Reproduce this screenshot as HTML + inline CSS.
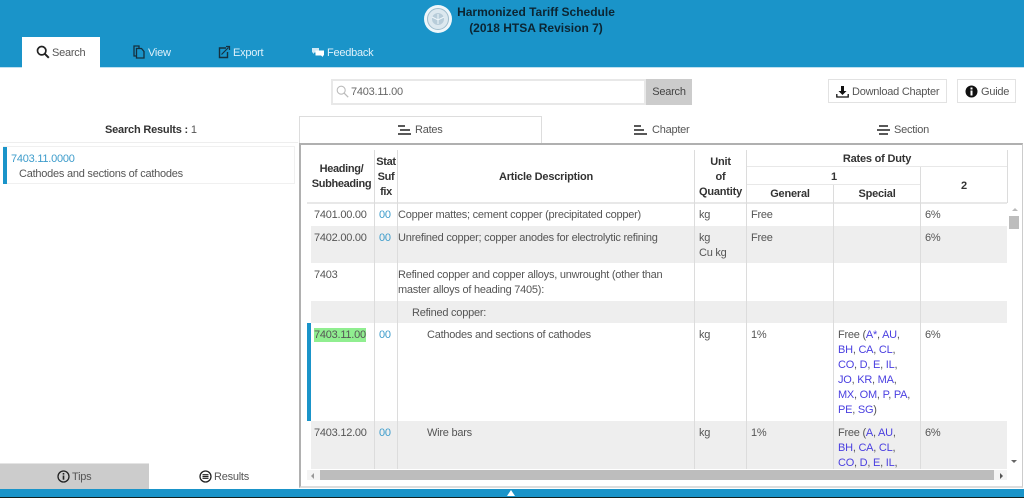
<!DOCTYPE html>
<html lang="en"><head><meta charset="utf-8"><title>Harmonized Tariff Schedule</title>
<style>
html,body{margin:0;padding:0;width:1024px;height:498px;overflow:hidden;background:#fff}
body{position:relative;font-family:"Liberation Sans",Arial,sans-serif;font-size:11px;letter-spacing:-.24px;line-height:15px;color:#555;filter:blur(.3px)}
div,svg,span.a{position:absolute}
.t{white-space:nowrap;margin-top:1px}
.b{font-weight:bold;color:#333;font-size:11px;letter-spacing:-.2px}
.c{text-align:center}
.l{color:#3d9ccb}
a{color:#4a3fe0;text-decoration:none}
.g{background:#eee;left:311px;width:696px}
.v{background:#dcdcdc;width:1px}
.h{background:#e8e8e8;height:1px}
.n{color:#dff1fa}
</style></head><body>
<div style="left:0;top:0;width:1024px;height:67px;background:#1a94c9"></div>
<div style="left:0;top:67px;width:1024px;height:1px;background:#bfe0f0"></div>
<svg style="left:423px;top:4px" width="30" height="30" viewBox="0 0 30 30"><circle cx="15" cy="15" r="14" fill="#eef6fa"/><circle cx="15" cy="15" r="10.5" fill="#dce8ef" stroke="#9fbccc"/><circle cx="15" cy="15" r="6" fill="#b7ccd9"/><path d="M9 13l6 3 6-3M15 10v10" stroke="#eef6fa" fill="none"/></svg>
<div class="t c" style="left:436px;top:4px;margin-top:0;width:200px;font-weight:bold;font-size:12px;letter-spacing:0;line-height:16px;color:#0b2533">Harmonized Tariff Schedule<br>(2018 HTSA Revision 7)</div>

<div style="left:22px;top:37px;width:78px;height:31px;background:#fff"></div>
<svg style="left:36px;top:45px" width="14" height="14" viewBox="0 0 14 14"><circle cx="5.7" cy="5.700" r="4.200" fill="none" stroke="#222" stroke-width="1.700"/><path d="M8.800 8.800l4 4" stroke="#222" stroke-width="2"/></svg>
<div class="t" style="left:52px;top:45px;color:#555">Search</div>
<svg style="left:133px;top:45px" width="12" height="14" viewBox="0 0 12 14"><path d="M3.500 3.500V13H11V6.500L8.500 3.500zM3.500 11H1V1H6V3.500" fill="none" stroke="#15303f" stroke-width="1.300"/></svg>
<div class="t n" style="left:148px;top:45px">View</div>
<svg style="left:218px;top:45px" width="13" height="14" viewBox="0 0 13 14"><path d="M8 3H1.500v9.500H9.500V7" fill="none" stroke="#15303f" stroke-width="1.400"/><path d="M3.500 9.500L10.500 2.500M8 1.500h3.500V5" fill="none" stroke="#15303f" stroke-width="1.200"/></svg>
<div class="t n" style="left:233px;top:45px">Export</div>
<svg style="left:312px;top:47px" width="12" height="11" viewBox="0 0 12 11"><path d="M0 1h7v4.500H2.500L1 7V5.500H0z" fill="#cfe8f5"/><path d="M3.500 3.500H12v5h-1V10L9 8.500H3.500z" fill="#fff"/></svg>
<div class="t n" style="left:327px;top:45px">Feedback</div>

<div style="left:331px;top:79px;width:311px;height:22px;border:2px solid #e8e8e8"></div>
<svg style="left:336px;top:85px" width="13" height="13" viewBox="0 0 13 13"><circle cx="5.200" cy="5.200" r="4" fill="none" stroke="#bbb" stroke-width="1.100"/><path d="M8.200 8.200l4 4" stroke="#bbb" stroke-width="1.300"/></svg>
<div class="t" style="left:351px;top:84px;color:#666">7403.11.00</div>
<div class="t c" style="left:646px;top:79px;margin-top:0;width:46px;height:26px;line-height:27px;background:#ccc;color:#444">Search</div>

<div style="left:828px;top:79px;width:117px;height:22px;border:1px solid #e2e2e2"></div>
<svg style="left:836px;top:85px" width="13" height="13" viewBox="0 0 13 13"><path d="M5 1h3v5h2.500l-4 4-4-4H5z" fill="#111"/><path d="M.8 9v3h11.400V9" fill="none" stroke="#111" stroke-width="1.300"/></svg>
<div class="t" style="left:852px;top:84px">Download Chapter</div>
<div style="left:957px;top:79px;width:57px;height:22px;border:1px solid #e2e2e2"></div>
<svg style="left:965px;top:85px" width="13" height="13" viewBox="0 0 13 13"><circle cx="6.500" cy="6.500" r="6" fill="#111"/><rect x="5.500" y="5.500" width="2" height="5" fill="#fff"/><rect x="5.500" y="2.500" width="2" height="2" fill="#fff"/></svg>
<div class="t" style="left:981px;top:84px">Guide</div>

<div class="t b" style="left:105px;top:122px">Search Results : <span style="font-weight:normal;color:#555">1</span></div>
<div class="h" style="left:0;top:142px;width:298px;background:#eee"></div>
<div style="left:3px;top:146px;width:292px;height:38px;border:1px solid #f0f0f0;box-sizing:border-box"></div>
<div style="left:3px;top:147px;width:4px;height:37px;background:#1a94c9"></div>
<div class="t l" style="left:11px;top:151px">7403.11.0000</div>
<div class="t" style="left:19px;top:166px">Cathodes and sections of cathodes</div>

<div style="left:0;top:463px;width:149px;height:26px;background:#ccc;border-top:1px solid #e4e4e4;box-sizing:border-box"></div>
<svg style="left:57px;top:470px" width="13" height="13" viewBox="0 0 13 13"><circle cx="6.500" cy="6.500" r="5.500" fill="none" stroke="#222" stroke-width="1.300"/><rect x="5.700" y="5.500" width="1.600" height="4.200" fill="#222"/><rect x="5.700" y="3" width="1.600" height="1.600" fill="#222"/></svg>
<div class="t" style="left:72px;top:469px">Tips</div>
<svg style="left:199px;top:470px" width="13" height="13" viewBox="0 0 13 13"><circle cx="6.500" cy="6.500" r="5.500" fill="none" stroke="#222" stroke-width="1.300"/><path d="M3.500 4.700h6M3.500 6.500h6M3.500 8.300h6" stroke="#222" stroke-width="1.200"/></svg>
<div class="t" style="left:214px;top:469px">Results</div>

<div style="left:299px;top:116px;width:243px;height:27px;border:1px solid #ddd;border-bottom:0;box-sizing:border-box"></div>
<svg style="left:398px;top:124px" width="14" height="12" viewBox="0 0 14 12"><path d="M0 2h7M2 6h10M0 10h13" stroke="#222" stroke-width="1.500"/></svg>
<div class="t" style="left:415px;top:122px">Rates</div>
<svg style="left:634px;top:124px" width="14" height="12" viewBox="0 0 14 12"><path d="M0 2h7M0 6h10M0 10h13" stroke="#222" stroke-width="1.500"/></svg>
<div class="t" style="left:652px;top:122px">Chapter</div>
<svg style="left:877px;top:124px" width="13" height="12" viewBox="0 0 13 12"><path d="M2 2h9M0 6h13M2 10h9" stroke="#222" stroke-width="1.500"/></svg>
<div class="t" style="left:894px;top:122px">Section</div>

<div style="left:299px;top:143px;width:724px;height:345px;border:2px solid #b0b0b0;border-right:1px solid #ccc;border-bottom:2px solid #ddd;box-sizing:border-box"></div>

<div class="g" style="top:226px;height:37px"></div>
<div class="g" style="top:301px;height:22px"></div>
<div class="g" style="top:421px;height:48px"></div>
<div style="left:307px;top:323px;width:4px;height:98px;background:#1a94c9"></div>

<div class="h" style="left:307px;top:202px;width:700px;height:2px"></div>
<div class="h" style="left:747px;top:166px;width:260px"></div>
<div class="h" style="left:747px;top:184px;width:174px"></div>
<div class="v" style="left:374px;top:150px;height:319px"></div>
<div class="v" style="left:397px;top:150px;height:319px"></div>
<div class="v" style="left:694px;top:150px;height:319px"></div>
<div class="v" style="left:746px;top:150px;height:319px"></div>
<div class="v" style="left:833px;top:185px;height:284px"></div>
<div class="v" style="left:920px;top:167px;height:302px"></div>
<div class="v" style="left:1007px;top:150px;height:53px"></div>

<div class="t b c" style="left:310px;top:161px;width:63px;letter-spacing:-.35px">Heading/<br>Subheading</div>
<div class="t b c" style="left:375px;top:154px;width:22px;letter-spacing:-.35px">Stat<br>Suf<br>fix</div>
<div class="t b c" style="left:398px;top:169px;width:296px">Article Description</div>
<div class="t b c" style="left:695px;top:154px;width:51px">Unit<br>of<br>Quantity</div>
<div class="t b c" style="left:747px;top:151px;width:260px">Rates of Duty</div>
<div class="t b c" style="left:747px;top:169px;width:174px">1</div>
<div class="t b c" style="left:921px;top:178px;width:86px">2</div>
<div class="t b c" style="left:747px;top:186px;width:86px">General</div>
<div class="t b c" style="left:834px;top:186px;width:86px">Special</div>

<div class="t" style="left:314px;top:207px">7401.00.00</div>
<div class="t l" style="left:379px;top:207px">00</div>
<div class="t" style="left:398px;top:207px">Copper mattes; cement copper (precipitated copper)</div>
<div class="t" style="left:699px;top:207px">kg</div>
<div class="t" style="left:751px;top:207px">Free</div>
<div class="t" style="left:925px;top:207px">6%</div>

<div class="t" style="left:314px;top:230px">7402.00.00</div>
<div class="t l" style="left:379px;top:230px">00</div>
<div class="t" style="left:398px;top:230px">Unrefined copper; copper anodes for electrolytic refining</div>
<div class="t" style="left:699px;top:230px">kg<br>Cu kg</div>
<div class="t" style="left:751px;top:230px">Free</div>
<div class="t" style="left:925px;top:230px">6%</div>

<div class="t" style="left:314px;top:267px">7403</div>
<div class="t" style="left:398px;top:267px">Refined copper and copper alloys, unwrought (other than<br>master alloys of heading 7405):</div>
<div class="t" style="left:412px;top:305px">Refined copper:</div>

<div style="left:314px;top:328px;width:52px;height:14px;background:#90ee90"></div>
<div class="t" style="left:314px;top:327px">7403.11.00</div>
<div class="t l" style="left:379px;top:327px">00</div>
<div class="t" style="left:427px;top:327px">Cathodes and sections of cathodes</div>
<div class="t" style="left:699px;top:327px">kg</div>
<div class="t" style="left:751px;top:327px">1%</div>
<div class="t" style="left:838px;top:327px">Free (<a>A*</a>, <a>AU</a>,<br><a>BH</a>, <a>CA</a>, <a>CL</a>,<br><a>CO</a>, <a>D</a>, <a>E</a>, <a>IL</a>,<br><a>JO</a>, <a>KR</a>, <a>MA</a>,<br><a>MX</a>, <a>OM</a>, <a>P</a>, <a>PA</a>,<br><a>PE</a>, <a>SG</a>)</div>
<div class="t" style="left:925px;top:327px">6%</div>

<div class="t" style="left:314px;top:425px">7403.12.00</div>
<div class="t l" style="left:379px;top:425px">00</div>
<div class="t" style="left:427px;top:425px">Wire bars</div>
<div class="t" style="left:699px;top:425px">kg</div>
<div class="t" style="left:751px;top:425px">1%</div>
<div style="left:838px;top:425px;width:80px;height:45px;overflow:hidden" class="t">Free (<a>A</a>, <a>AU</a>,<br><a>BH</a>, <a>CA</a>, <a>CL</a>,<br><a>CO</a>, <a>D</a>, <a>E</a>, <a>IL</a>,</div>
<div class="t" style="left:925px;top:425px">6%</div>

<div style="left:1009px;top:216px;width:10px;height:13px;background:#bdbdbd"></div>
<div style="left:1012px;top:208px;width:0;height:0;border:3px solid transparent;border-top:0;border-bottom:3px solid #bbb"></div>
<div style="left:1011px;top:460px;width:0;height:0;border:3px solid transparent;border-bottom:0;border-top:3px solid #666"></div>
<div style="left:307px;top:470px;width:700px;height:10px;background:#f4f4f4"></div>
<div style="left:320px;top:470px;width:674px;height:10px;background:#bdbdbd"></div>
<div style="left:311px;top:473px;width:0;height:0;border:3px solid transparent;border-left:0;border-right:3px solid #999"></div>
<div style="left:1000px;top:473px;width:0;height:0;border:3px solid transparent;border-right:0;border-left:3px solid #555"></div>

<div style="left:0;top:489px;width:1024px;height:8px;background:#1a94c9"></div>
<div style="left:0;top:497px;width:1024px;height:1px;background:#122"></div>
<div style="left:507px;top:490px;width:0;height:0;border-left:4px solid transparent;border-right:4px solid transparent;border-bottom:6px solid #fff"></div>
</body></html>
